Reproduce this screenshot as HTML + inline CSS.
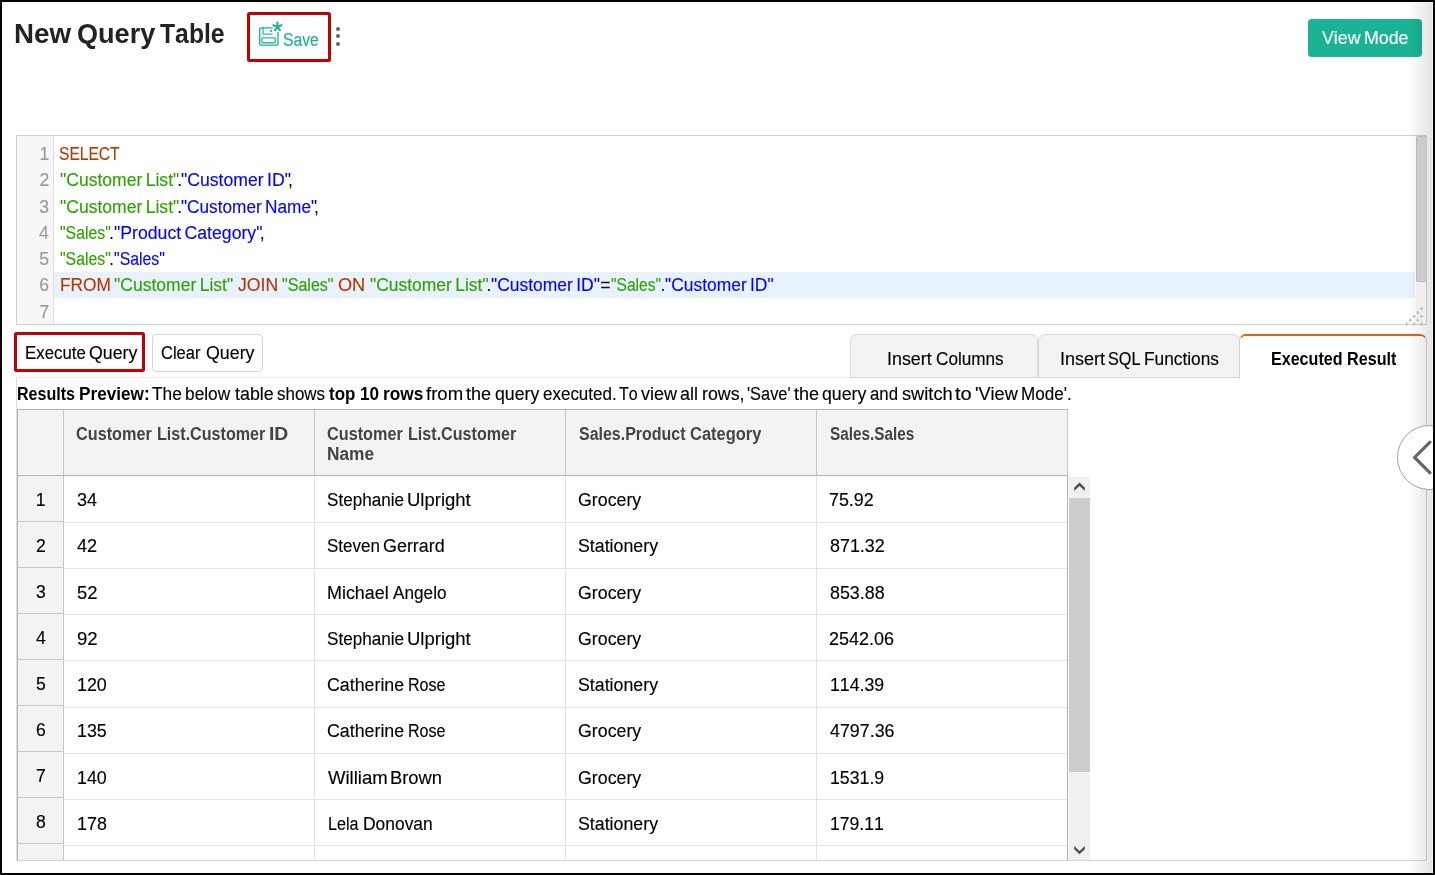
<!DOCTYPE html>
<html lang="en"><head><meta charset="utf-8"><title>New Query Table</title>
<style>
html,body{margin:0;padding:0}
body{width:1435px;height:875px;overflow:hidden;background:#fff;position:relative;font-family:"Liberation Sans",sans-serif;font-kerning:none;color:#111}
.t{position:absolute;white-space:pre;transform-origin:0 0;display:block;-webkit-text-stroke:0.14px currentColor}
.t.b{-webkit-text-stroke:0}
.abs{position:absolute;box-sizing:border-box}
</style></head><body>
<div id="app" style="position:absolute;left:0;top:0;width:1435px;height:875px;will-change:transform">

<header>
<span class="t b" style="left:14.40px;top:16.10px;font-size:28.5px;line-height:34px;font-weight:bold;color:#222;word-spacing:-2.42px;transform:scaleX(0.9727);">New </span>
<span class="t b" style="left:76.74px;top:16.10px;font-size:28.5px;line-height:34px;font-weight:bold;color:#222;word-spacing:-2.42px;transform:scaleX(0.9501);">Query </span>
<span class="t b" style="left:160.47px;top:16.10px;font-size:28.5px;line-height:34px;font-weight:bold;color:#222;word-spacing:-2.42px;transform:scaleX(0.8682);">Table</span>
<div class="abs" style="left:246.7px;top:12.3px;width:84px;height:49.4px;border:3.2px solid #c00000;border-radius:2.5px"></div>
<svg class="abs" style="left:252px;top:16px" width="40" height="36" viewBox="252 16 40 36" fill="none" stroke="#1ab394" stroke-width="1.35" stroke-linejoin="round" stroke-linecap="round">
<path d="M272.2 27.8 H261.2 Q259.7 27.8 259.7 29.3 V43.6 Q259.7 45.1 261.2 45.1 H276.5 Q278 45.1 278 43.6 V32.6"/>
<path d="M263.1 28 V34.1 H272.2" stroke-opacity="0.85"/>
<rect x="261.9" y="37.8" width="13.4" height="4.9" rx="1" stroke-opacity="0.9"/>
<circle cx="271.1" cy="30.9" r="1.05" fill="#1ab394" stroke="none"/>
<g stroke-width="2.1"><path d="M277.5 26.9 V22.6 M277.5 26.9 L273.5 25.2 M277.5 26.9 L281.5 25.2 M277.5 26.9 L275.1 30.1 M277.5 26.9 L279.9 30.1"/></g>
</svg>
<span class="t " style="left:282.84px;top:29.90px;font-size:17.6px;line-height:21px;color:#1ab394;word-spacing:-1.50px;transform:scaleX(0.8927);">Save</span>
<div class="abs" style="left:336px;top:26.5px;width:4px;height:4px;border-radius:50%;background:#666"></div>
<div class="abs" style="left:336px;top:34.0px;width:4px;height:4px;border-radius:50%;background:#666"></div>
<div class="abs" style="left:336px;top:41.5px;width:4px;height:4px;border-radius:50%;background:#666"></div>
<div class="abs" style="left:1308px;top:19px;width:114px;height:38px;background:#1ab394;border-radius:4px"></div>
<span class="t " style="left:1321.97px;top:27.00px;font-size:18px;line-height:22px;color:#fff;word-spacing:-1.53px;transform:scaleX(0.9881);">View Mode</span>
</header>
<section id="editor" aria-label="SQL editor">
<div class="abs" id="editor-box" style="left:16px;top:135px;width:1411px;height:190px;border:1px solid #d0d0d0;background:#fff"></div>
<div class="abs" style="left:17px;top:136px;width:37px;height:188px;background:#f7f7f7;border-right:1px solid #ddd"></div>
<div class="abs" style="left:54px;top:271.80px;width:1360.8px;height:25.90px;background:#e8f2ff"></div>
<span class="t " style="left:39.42px;top:144.00px;font-size:17.6px;line-height:21px;color:#999;word-spacing:-1.50px;transform:scaleX(1.0000);">1</span>
<span class="t " style="left:39.45px;top:170.20px;font-size:17.6px;line-height:21px;color:#999;word-spacing:-1.50px;transform:scaleX(1.0000);">2</span>
<span class="t " style="left:39.34px;top:196.50px;font-size:17.6px;line-height:21px;color:#999;word-spacing:-1.50px;transform:scaleX(1.0000);">3</span>
<span class="t " style="left:39.08px;top:222.80px;font-size:17.6px;line-height:21px;color:#999;word-spacing:-1.50px;transform:scaleX(1.0000);">4</span>
<span class="t " style="left:39.30px;top:249.00px;font-size:17.6px;line-height:21px;color:#999;word-spacing:-1.50px;transform:scaleX(1.0000);">5</span>
<span class="t " style="left:39.34px;top:275.00px;font-size:17.6px;line-height:21px;color:#999;word-spacing:-1.50px;transform:scaleX(1.0000);">6</span>
<span class="t " style="left:39.45px;top:301.50px;font-size:17.6px;line-height:21px;color:#999;word-spacing:-1.50px;transform:scaleX(1.0000);">7</span>
<span class="t " style="left:59.44px;top:144.00px;font-size:17.6px;line-height:21px;color:#b03a00;word-spacing:-1.50px;transform:scaleX(0.8861);">SELECT</span>
<span class="t " style="left:59.50px;top:170.20px;font-size:17.6px;line-height:21px;color:#33a000;word-spacing:-1.50px;transform:scaleX(0.9977);">"Customer List"</span>
<span class="t " style="left:177.19px;top:170.20px;font-size:17.6px;line-height:21px;color:#111;word-spacing:-1.50px;transform:scaleX(1.0000);">.</span>
<span class="t " style="left:180.50px;top:170.20px;font-size:17.6px;line-height:21px;color:#0505ff;word-spacing:-1.50px;transform:scaleX(1.0020);">"Customer ID"</span>
<span class="t " style="left:287.92px;top:170.20px;font-size:17.6px;line-height:21px;color:#111;word-spacing:-1.50px;transform:scaleX(1.0000);">,</span>
<span class="t " style="left:59.50px;top:196.50px;font-size:17.6px;line-height:21px;color:#33a000;word-spacing:-1.50px;transform:scaleX(0.9977);">"Customer List"</span>
<span class="t " style="left:177.19px;top:196.50px;font-size:17.6px;line-height:21px;color:#111;word-spacing:-1.50px;transform:scaleX(1.0000);">.</span>
<span class="t " style="left:180.52px;top:196.50px;font-size:17.6px;line-height:21px;color:#0505ff;word-spacing:-1.50px;transform:scaleX(0.9787);">"Customer Name"</span>
<span class="t " style="left:314.12px;top:196.50px;font-size:17.6px;line-height:21px;color:#111;word-spacing:-1.50px;transform:scaleX(1.0000);">,</span>
<span class="t " style="left:59.58px;top:222.80px;font-size:17.6px;line-height:21px;color:#33a000;word-spacing:-1.50px;transform:scaleX(0.8996);">"Sales"</span>
<span class="t " style="left:108.89px;top:222.80px;font-size:17.6px;line-height:21px;color:#111;word-spacing:-1.50px;transform:scaleX(1.0000);">.</span>
<span class="t " style="left:113.80px;top:222.80px;font-size:17.6px;line-height:21px;color:#0505ff;word-spacing:-1.50px;transform:scaleX(1.0037);">"Product Category"</span>
<span class="t " style="left:259.72px;top:222.80px;font-size:17.6px;line-height:21px;color:#111;word-spacing:-1.50px;transform:scaleX(1.0000);">,</span>
<span class="t " style="left:59.58px;top:249.00px;font-size:17.6px;line-height:21px;color:#33a000;word-spacing:-1.50px;transform:scaleX(0.8996);">"Sales"</span>
<span class="t " style="left:108.89px;top:249.00px;font-size:17.6px;line-height:21px;color:#111;word-spacing:-1.50px;transform:scaleX(1.0000);">.</span>
<span class="t " style="left:113.88px;top:249.00px;font-size:17.6px;line-height:21px;color:#0505ff;word-spacing:-1.50px;transform:scaleX(0.9014);">"Sales"</span>
<span class="t " style="left:59.53px;top:275.00px;font-size:17.6px;line-height:21px;color:#b03a00;word-spacing:-1.50px;transform:scaleX(0.9832);">FROM</span>
<span class="t " style="left:114.20px;top:275.00px;font-size:17.6px;line-height:21px;color:#33a000;word-spacing:-1.50px;transform:scaleX(0.9969);">"Customer List"</span>
<span class="t " style="left:237.97px;top:275.00px;font-size:17.6px;line-height:21px;color:#b03a00;word-spacing:-1.50px;transform:scaleX(1.0031);">JOIN</span>
<span class="t " style="left:282.47px;top:275.00px;font-size:17.6px;line-height:21px;color:#33a000;word-spacing:-1.50px;transform:scaleX(0.9123);">"Sales"</span>
<span class="t " style="left:338.09px;top:275.00px;font-size:17.6px;line-height:21px;color:#b03a00;word-spacing:-1.50px;transform:scaleX(1.0319);">ON</span>
<span class="t " style="left:369.61px;top:275.00px;font-size:17.6px;line-height:21px;color:#33a000;word-spacing:-1.50px;transform:scaleX(0.9926);">"Customer List"</span>
<span class="t " style="left:486.59px;top:275.00px;font-size:17.6px;line-height:21px;color:#111;word-spacing:-1.50px;transform:scaleX(1.0000);">.</span>
<span class="t " style="left:490.61px;top:275.00px;font-size:17.6px;line-height:21px;color:#0505ff;word-spacing:-1.50px;transform:scaleX(0.9919);">"Customer ID"</span>
<span class="t " style="left:600.27px;top:275.00px;font-size:17.6px;line-height:21px;color:#111;word-spacing:-1.50px;transform:scaleX(1.0000);">=</span>
<span class="t " style="left:610.99px;top:275.00px;font-size:17.6px;line-height:21px;color:#33a000;word-spacing:-1.50px;transform:scaleX(0.8869);">"Sales"</span>
<span class="t " style="left:660.49px;top:275.00px;font-size:17.6px;line-height:21px;color:#111;word-spacing:-1.50px;transform:scaleX(1.0000);">.</span>
<span class="t " style="left:664.91px;top:275.00px;font-size:17.6px;line-height:21px;color:#0505ff;word-spacing:-1.50px;transform:scaleX(0.9900);">"Customer ID"</span>
</section>
<div id="actions">
<div class="abs" style="left:14.3px;top:332.3px;width:131px;height:40.2px;border:3.2px solid #c00000;border-radius:2.5px"></div>
<span class="t " style="left:24.57px;top:343.10px;font-size:17.6px;line-height:21px;color:#000;word-spacing:-1.50px;transform:scaleX(0.9565);">Execute </span>
<span class="t " style="left:89.31px;top:343.10px;font-size:17.6px;line-height:21px;color:#000;word-spacing:-1.50px;transform:scaleX(1.0094);">Query</span>
<div class="abs" style="left:152px;top:334px;width:110.6px;height:37.6px;border:1px solid #d6d6d6;border-radius:4px;background:#fff"></div>
<span class="t " style="left:161.11px;top:343.10px;font-size:17.6px;line-height:21px;color:#000;word-spacing:-1.50px;transform:scaleX(0.9371);">Clear </span>
<span class="t " style="left:205.91px;top:343.10px;font-size:17.6px;line-height:21px;color:#000;word-spacing:-1.50px;transform:scaleX(1.0115);">Query</span>
</div>
<section id="results">
<div class="abs" id="panel" style="left:16px;top:376.6px;width:1411px;height:484.4px;border:1px solid #d4d4d4;border-left-color:#dcdcdc;border-top:1.4px solid #eeebed;background:#fff"></div>
<div class="abs" style="left:850px;top:334.2px;width:188px;height:43.6px;background:#f3f3f3;border:1px solid #dcdcdc;border-bottom-color:#d6d6d6;border-radius:7px 7px 0 0"></div>
<div class="abs" style="left:1038px;top:334.2px;width:202px;height:43.6px;background:#f3f3f3;border:1px solid #dcdcdc;border-bottom-color:#d6d6d6;border-radius:7px 7px 0 0"></div>
<div class="abs" style="left:1239.4px;top:334.2px;width:187.6px;height:44.4px;background:#fff;border:1px solid #d4d4d4;border-top:2.4px solid #e8601c;border-bottom:none;border-radius:7px 7px 0 0"></div>
<span class="t " style="left:887.30px;top:349.00px;font-size:17.6px;line-height:21px;color:#000;word-spacing:-1.50px;transform:scaleX(1.0150);">Insert </span>
<span class="t " style="left:935.68px;top:349.00px;font-size:17.6px;line-height:21px;color:#000;word-spacing:-1.50px;transform:scaleX(0.9747);">Columns</span>
<span class="t " style="left:1060.29px;top:349.00px;font-size:17.6px;line-height:21px;color:#000;word-spacing:-1.50px;transform:scaleX(1.0245);">Insert </span>
<span class="t " style="left:1108.21px;top:349.00px;font-size:17.6px;line-height:21px;color:#000;word-spacing:-1.50px;transform:scaleX(0.9222);">SQL </span>
<span class="t " style="left:1144.23px;top:349.00px;font-size:17.6px;line-height:21px;color:#000;word-spacing:-1.50px;transform:scaleX(0.9835);">Functions</span>
<span class="t b" style="left:1270.87px;top:349.00px;font-size:17.6px;line-height:21px;font-weight:bold;color:#000;word-spacing:-1.50px;transform:scaleX(0.9142);">Executed </span>
<span class="t b" style="left:1347.47px;top:349.00px;font-size:17.6px;line-height:21px;font-weight:bold;color:#000;word-spacing:-1.50px;transform:scaleX(0.9180);">Result</span>
<span class="t b" style="left:17.38px;top:384.10px;font-size:17.6px;line-height:21px;font-weight:bold;color:#000;word-spacing:-1.50px;transform:scaleX(0.9128);">Results </span>
<span class="t b" style="left:79.30px;top:384.10px;font-size:17.6px;line-height:21px;font-weight:bold;color:#000;word-spacing:-1.50px;transform:scaleX(0.9766);">Preview:</span>
<span class="t " style="left:151.86px;top:384.10px;font-size:17.6px;line-height:21px;color:#000;word-spacing:-1.50px;transform:scaleX(0.9846);">The </span>
<span class="t " style="left:185.13px;top:384.10px;font-size:17.6px;line-height:21px;color:#000;word-spacing:-1.50px;transform:scaleX(0.9845);">below </span>
<span class="t " style="left:235.28px;top:384.10px;font-size:17.6px;line-height:21px;color:#000;word-spacing:-1.50px;transform:scaleX(1.0157);">table </span>
<span class="t " style="left:277.28px;top:384.10px;font-size:17.6px;line-height:21px;color:#000;word-spacing:-1.50px;transform:scaleX(0.9639);">shows</span>
<span class="t b" style="left:329.04px;top:384.10px;font-size:17.6px;line-height:21px;font-weight:bold;color:#000;word-spacing:-1.50px;transform:scaleX(0.9612);">top </span>
<span class="t b" style="left:359.67px;top:384.10px;font-size:17.6px;line-height:21px;font-weight:bold;color:#000;word-spacing:-1.50px;transform:scaleX(0.9749);">10 </span>
<span class="t b" style="left:382.51px;top:384.10px;font-size:17.6px;line-height:21px;font-weight:bold;color:#000;word-spacing:-1.50px;transform:scaleX(0.9822);">rows</span>
<span class="t " style="left:425.89px;top:384.10px;font-size:17.6px;line-height:21px;color:#000;word-spacing:-1.50px;transform:scaleX(1.0535);">from </span>
<span class="t " style="left:466.28px;top:384.10px;font-size:17.6px;line-height:21px;color:#000;word-spacing:-1.50px;transform:scaleX(1.0249);">the </span>
<span class="t " style="left:495.40px;top:384.10px;font-size:17.6px;line-height:21px;color:#000;word-spacing:-1.50px;transform:scaleX(1.0080);">query</span>
<span class="t " style="left:543.23px;top:384.10px;font-size:17.6px;line-height:21px;color:#000;word-spacing:-1.50px;transform:scaleX(0.9653);">executed. </span>
<span class="t " style="left:619.49px;top:384.10px;font-size:17.6px;line-height:21px;color:#000;word-spacing:-1.50px;transform:scaleX(0.9122);">To </span>
<span class="t " style="left:641.09px;top:384.10px;font-size:17.6px;line-height:21px;color:#000;word-spacing:-1.50px;transform:scaleX(1.0258);">view </span>
<span class="t " style="left:680.49px;top:384.10px;font-size:17.6px;line-height:21px;color:#000;word-spacing:-1.50px;transform:scaleX(1.0202);">all </span>
<span class="t " style="left:701.77px;top:384.10px;font-size:17.6px;line-height:21px;color:#000;word-spacing:-1.50px;transform:scaleX(1.0127);">rows,</span>
<span class="t " style="left:746.72px;top:384.10px;font-size:17.6px;line-height:21px;color:#000;word-spacing:-1.50px;transform:scaleX(0.9299);">'Save' </span>
<span class="t " style="left:793.68px;top:384.10px;font-size:17.6px;line-height:21px;color:#000;word-spacing:-1.50px;transform:scaleX(1.0249);">the </span>
<span class="t " style="left:821.70px;top:384.10px;font-size:17.6px;line-height:21px;color:#000;word-spacing:-1.50px;transform:scaleX(1.0080);">query </span>
<span class="t " style="left:870.14px;top:384.10px;font-size:17.6px;line-height:21px;color:#000;word-spacing:-1.50px;transform:scaleX(0.9533);">and</span>
<span class="t " style="left:901.74px;top:384.10px;font-size:17.6px;line-height:21px;color:#000;word-spacing:-1.50px;transform:scaleX(1.0367);">switch </span>
<span class="t " style="left:954.95px;top:384.10px;font-size:17.6px;line-height:21px;color:#000;word-spacing:-1.50px;transform:scaleX(1.1410);">to </span>
<span class="t " style="left:974.83px;top:384.10px;font-size:17.6px;line-height:21px;color:#000;word-spacing:-1.50px;transform:scaleX(1.0306);">'View </span>
<span class="t " style="left:1021.45px;top:384.10px;font-size:17.6px;line-height:21px;color:#000;word-spacing:-1.50px;transform:scaleX(0.9711);">Mode'.</span>
<div class="abs" style="left:17.2px;top:408.8px;width:1050.8px;height:67.2px;background:#f3f3f3;border:1px solid #b4b4b4;border-right-color:#c4c4c4"></div>
<div class="abs" style="left:62.9px;top:409.8px;width:1px;height:65.4px;background:#c8c8c8"></div>
<div class="abs" style="left:314.1px;top:409.8px;width:1px;height:65.4px;background:#c8c8c8"></div>
<div class="abs" style="left:564.9px;top:409.8px;width:1px;height:65.4px;background:#c8c8c8"></div>
<div class="abs" style="left:815.9px;top:409.8px;width:1px;height:65.4px;background:#c8c8c8"></div>
<span class="t b" style="left:76.48px;top:423.70px;font-size:17.6px;line-height:21px;font-weight:bold;color:#444;word-spacing:-1.50px;transform:scaleX(0.9229);">Customer </span>
<span class="t b" style="left:157.27px;top:423.70px;font-size:17.6px;line-height:21px;font-weight:bold;color:#444;word-spacing:-1.50px;transform:scaleX(0.9154);">List.Customer </span>
<span class="t b" style="left:269.46px;top:423.70px;font-size:17.6px;line-height:21px;font-weight:bold;color:#444;word-spacing:-1.50px;transform:scaleX(1.0967);">ID</span>
<span class="t b" style="left:327.38px;top:423.70px;font-size:17.6px;line-height:21px;font-weight:bold;color:#444;word-spacing:-1.50px;transform:scaleX(0.9229);">Customer </span>
<span class="t b" style="left:408.17px;top:423.70px;font-size:17.6px;line-height:21px;font-weight:bold;color:#444;word-spacing:-1.50px;transform:scaleX(0.9154);">List.Customer</span>
<span class="t b" style="left:327.29px;top:444.30px;font-size:17.6px;line-height:21px;font-weight:bold;color:#444;word-spacing:-1.50px;transform:scaleX(0.9836);">Name</span>
<span class="t b" style="left:578.69px;top:423.70px;font-size:17.6px;line-height:21px;font-weight:bold;color:#444;word-spacing:-1.50px;transform:scaleX(0.9078);">Sales.Product </span>
<span class="t b" style="left:689.67px;top:423.70px;font-size:17.6px;line-height:21px;font-weight:bold;color:#444;word-spacing:-1.50px;transform:scaleX(0.9368);">Category</span>
<span class="t b" style="left:829.61px;top:423.70px;font-size:17.6px;line-height:21px;font-weight:bold;color:#444;word-spacing:-1.50px;transform:scaleX(0.8709);">Sales.Sales</span>
<div class="abs" style="left:17.2px;top:476px;width:46.8px;height:384px;background:#f3f3f3;border-left:1px solid #b4b4b4;border-right:1px solid #c8c8c8"></div>
<div class="abs" style="left:1066.8px;top:476px;width:1px;height:384.6px;background:#b0b0b0"></div>
<div class="abs" style="left:314.1px;top:476px;width:1px;height:384.6px;background:#e4e4e4"></div>
<div class="abs" style="left:564.9px;top:476px;width:1px;height:384.6px;background:#e4e4e4"></div>
<div class="abs" style="left:815.9px;top:476px;width:1px;height:384.6px;background:#e4e4e4"></div>
<div class="abs" style="left:18.2px;top:521.00px;width:45.2px;height:1px;background:#c6c6c6"></div>
<div class="abs" style="left:64.2px;top:521.70px;width:1002.6px;height:1px;background:#e4e4e4"></div>
<span class="t " style="left:35.72px;top:489.80px;font-size:17.6px;line-height:21px;color:#000;word-spacing:-1.50px;transform:scaleX(1.0000);">1</span>
<span class="t " style="left:76.76px;top:489.80px;font-size:17.6px;line-height:21px;color:#000;word-spacing:-1.50px;transform:scaleX(1.0223);">34</span>
<span class="t " style="left:327.17px;top:489.80px;font-size:17.6px;line-height:21px;color:#000;word-spacing:-1.50px;transform:scaleX(0.9718);">Stephanie </span>
<span class="t " style="left:407.32px;top:489.80px;font-size:17.6px;line-height:21px;color:#000;word-spacing:-1.50px;transform:scaleX(1.0514);">Ulpright</span>
<span class="t " style="left:577.96px;top:489.80px;font-size:17.6px;line-height:21px;color:#000;word-spacing:-1.50px;transform:scaleX(1.0102);">Grocery</span>
<span class="t " style="left:829.43px;top:489.80px;font-size:17.6px;line-height:21px;color:#000;word-spacing:-1.50px;transform:scaleX(1.0153);">75.92</span>
<div class="abs" style="left:18.2px;top:567.00px;width:45.2px;height:1px;background:#c6c6c6"></div>
<div class="abs" style="left:64.2px;top:567.90px;width:1002.6px;height:1px;background:#e4e4e4"></div>
<span class="t " style="left:35.96px;top:535.80px;font-size:17.6px;line-height:21px;color:#000;word-spacing:-1.50px;transform:scaleX(1.0000);">2</span>
<span class="t " style="left:77.03px;top:535.80px;font-size:17.6px;line-height:21px;color:#000;word-spacing:-1.50px;transform:scaleX(1.0280);">42</span>
<span class="t " style="left:327.18px;top:535.80px;font-size:17.6px;line-height:21px;color:#000;word-spacing:-1.50px;transform:scaleX(0.9650);">Steven </span>
<span class="t " style="left:383.35px;top:535.80px;font-size:17.6px;line-height:21px;color:#000;word-spacing:-1.50px;transform:scaleX(1.0185);">Gerrard</span>
<span class="t " style="left:578.04px;top:535.80px;font-size:17.6px;line-height:21px;color:#000;word-spacing:-1.50px;transform:scaleX(1.0101);">Stationery</span>
<span class="t " style="left:829.57px;top:535.80px;font-size:17.6px;line-height:21px;color:#000;word-spacing:-1.50px;transform:scaleX(1.0176);">871.32</span>
<div class="abs" style="left:18.2px;top:613.00px;width:45.2px;height:1px;background:#c6c6c6"></div>
<div class="abs" style="left:64.2px;top:614.10px;width:1002.6px;height:1px;background:#e4e4e4"></div>
<span class="t " style="left:36.01px;top:581.80px;font-size:17.6px;line-height:21px;color:#000;word-spacing:-1.50px;transform:scaleX(1.0000);">3</span>
<span class="t " style="left:76.71px;top:582.80px;font-size:17.6px;line-height:21px;color:#000;word-spacing:-1.50px;transform:scaleX(1.0452);">52</span>
<span class="t " style="left:327.28px;top:582.80px;font-size:17.6px;line-height:21px;color:#000;word-spacing:-1.50px;transform:scaleX(1.0185);">Michael </span>
<span class="t " style="left:392.82px;top:582.80px;font-size:17.6px;line-height:21px;color:#000;word-spacing:-1.50px;transform:scaleX(0.9773);">Angelo</span>
<span class="t " style="left:577.96px;top:582.80px;font-size:17.6px;line-height:21px;color:#000;word-spacing:-1.50px;transform:scaleX(1.0102);">Grocery</span>
<span class="t " style="left:829.57px;top:582.80px;font-size:17.6px;line-height:21px;color:#000;word-spacing:-1.50px;transform:scaleX(1.0153);">853.88</span>
<div class="abs" style="left:18.2px;top:659.00px;width:45.2px;height:1px;background:#c6c6c6"></div>
<div class="abs" style="left:64.2px;top:660.30px;width:1002.6px;height:1px;background:#e4e4e4"></div>
<span class="t " style="left:36.01px;top:627.80px;font-size:17.6px;line-height:21px;color:#000;word-spacing:-1.50px;transform:scaleX(1.0000);">4</span>
<span class="t " style="left:76.58px;top:628.80px;font-size:17.6px;line-height:21px;color:#000;word-spacing:-1.50px;transform:scaleX(1.0523);">92</span>
<span class="t " style="left:327.17px;top:628.80px;font-size:17.6px;line-height:21px;color:#000;word-spacing:-1.50px;transform:scaleX(0.9718);">Stephanie </span>
<span class="t " style="left:407.32px;top:628.80px;font-size:17.6px;line-height:21px;color:#000;word-spacing:-1.50px;transform:scaleX(1.0514);">Ulpright</span>
<span class="t " style="left:577.96px;top:628.80px;font-size:17.6px;line-height:21px;color:#000;word-spacing:-1.50px;transform:scaleX(1.0102);">Grocery</span>
<span class="t " style="left:829.45px;top:628.80px;font-size:17.6px;line-height:21px;color:#000;word-spacing:-1.50px;transform:scaleX(1.0216);">2542.06</span>
<div class="abs" style="left:18.2px;top:705.00px;width:45.2px;height:1px;background:#c6c6c6"></div>
<div class="abs" style="left:64.2px;top:706.50px;width:1002.6px;height:1px;background:#e4e4e4"></div>
<span class="t " style="left:35.97px;top:673.80px;font-size:17.6px;line-height:21px;color:#000;word-spacing:-1.50px;transform:scaleX(1.0000);">5</span>
<span class="t " style="left:77.39px;top:674.80px;font-size:17.6px;line-height:21px;color:#000;word-spacing:-1.50px;transform:scaleX(1.0133);">120</span>
<span class="t " style="left:327.25px;top:674.80px;font-size:17.6px;line-height:21px;color:#000;word-spacing:-1.50px;transform:scaleX(1.0116);">Catherine </span>
<span class="t " style="left:408.03px;top:674.80px;font-size:17.6px;line-height:21px;color:#000;word-spacing:-1.50px;transform:scaleX(0.9135);">Rose</span>
<span class="t " style="left:578.04px;top:674.80px;font-size:17.6px;line-height:21px;color:#000;word-spacing:-1.50px;transform:scaleX(1.0101);">Stationery</span>
<span class="t " style="left:830.10px;top:674.80px;font-size:17.6px;line-height:21px;color:#000;word-spacing:-1.50px;transform:scaleX(1.0066);">114.39</span>
<div class="abs" style="left:18.2px;top:751.00px;width:45.2px;height:1px;background:#c6c6c6"></div>
<div class="abs" style="left:64.2px;top:752.70px;width:1002.6px;height:1px;background:#e4e4e4"></div>
<span class="t " style="left:35.90px;top:719.80px;font-size:17.6px;line-height:21px;color:#000;word-spacing:-1.50px;transform:scaleX(1.0000);">6</span>
<span class="t " style="left:77.39px;top:720.80px;font-size:17.6px;line-height:21px;color:#000;word-spacing:-1.50px;transform:scaleX(1.0152);">135</span>
<span class="t " style="left:327.25px;top:720.80px;font-size:17.6px;line-height:21px;color:#000;word-spacing:-1.50px;transform:scaleX(1.0116);">Catherine </span>
<span class="t " style="left:408.03px;top:720.80px;font-size:17.6px;line-height:21px;color:#000;word-spacing:-1.50px;transform:scaleX(0.9135);">Rose</span>
<span class="t " style="left:577.96px;top:720.80px;font-size:17.6px;line-height:21px;color:#000;word-spacing:-1.50px;transform:scaleX(1.0102);">Grocery</span>
<span class="t " style="left:829.94px;top:720.80px;font-size:17.6px;line-height:21px;color:#000;word-spacing:-1.50px;transform:scaleX(1.0137);">4797.36</span>
<div class="abs" style="left:18.2px;top:797.00px;width:45.2px;height:1px;background:#c6c6c6"></div>
<div class="abs" style="left:64.2px;top:798.90px;width:1002.6px;height:1px;background:#e4e4e4"></div>
<span class="t " style="left:35.95px;top:765.80px;font-size:17.6px;line-height:21px;color:#000;word-spacing:-1.50px;transform:scaleX(1.0000);">7</span>
<span class="t " style="left:77.39px;top:767.80px;font-size:17.6px;line-height:21px;color:#000;word-spacing:-1.50px;transform:scaleX(1.0133);">140</span>
<span class="t " style="left:327.67px;top:767.80px;font-size:17.6px;line-height:21px;color:#000;word-spacing:-1.50px;transform:scaleX(1.0529);">William </span>
<span class="t " style="left:389.94px;top:767.80px;font-size:17.6px;line-height:21px;color:#000;word-spacing:-1.50px;transform:scaleX(1.0444);">Brown</span>
<span class="t " style="left:577.96px;top:767.80px;font-size:17.6px;line-height:21px;color:#000;word-spacing:-1.50px;transform:scaleX(1.0102);">Grocery</span>
<span class="t " style="left:830.10px;top:767.80px;font-size:17.6px;line-height:21px;color:#000;word-spacing:-1.50px;transform:scaleX(1.0066);">1531.9</span>
<div class="abs" style="left:18.2px;top:843.00px;width:45.2px;height:1px;background:#c6c6c6"></div>
<div class="abs" style="left:64.2px;top:845.10px;width:1002.6px;height:1px;background:#e4e4e4"></div>
<span class="t " style="left:35.96px;top:811.80px;font-size:17.6px;line-height:21px;color:#000;word-spacing:-1.50px;transform:scaleX(1.0000);">8</span>
<span class="t " style="left:77.39px;top:813.80px;font-size:17.6px;line-height:21px;color:#000;word-spacing:-1.50px;transform:scaleX(1.0162);">178</span>
<span class="t " style="left:327.53px;top:813.80px;font-size:17.6px;line-height:21px;color:#000;word-spacing:-1.50px;transform:scaleX(0.9173);">Lela </span>
<span class="t " style="left:362.52px;top:813.80px;font-size:17.6px;line-height:21px;color:#000;word-spacing:-1.50px;transform:scaleX(0.9902);">Donovan</span>
<span class="t " style="left:578.04px;top:813.80px;font-size:17.6px;line-height:21px;color:#000;word-spacing:-1.50px;transform:scaleX(1.0101);">Stationery</span>
<span class="t " style="left:830.11px;top:813.80px;font-size:17.6px;line-height:21px;color:#000;word-spacing:-1.50px;transform:scaleX(0.9994);">179.11</span>
<div class="abs" style="left:1069.1px;top:477px;width:20.8px;height:383px;background:#f0f0f0"></div>
<div class="abs" style="left:1069.1px;top:498px;width:20.8px;height:273.8px;background:#cdcdcd"></div>
<svg class="abs" style="left:1069px;top:476px" width="22" height="24" viewBox="1069 476 22 24"><polygon fill="#505050" points="1074.2,487.7 1079.55,482.4 1084.9,487.7 1084.9,490.9 1079.55,485.9 1074.2,490.9"/></svg>
<svg class="abs" style="left:1069px;top:838px" width="22" height="24" viewBox="1069 838 22 24"><polygon fill="#505050" points="1074.2,849.2 1079.55,854.3 1084.9,849.2 1084.9,846.0 1079.55,850.9 1074.2,846.0"/></svg>
</section>
<div id="chrome">
<div class="abs" style="left:1408px;top:2px;width:24.2px;height:871px;background:linear-gradient(to right,rgba(0,0,0,0),rgba(0,0,0,0.108))"></div>
<div class="abs" style="left:1432.2px;top:2px;width:1px;height:871px;background:#f3f3f3"></div>
<div class="abs" style="left:1416px;top:136px;width:10.4px;height:188px;background:#eeeeee"></div>
<div class="abs" style="left:1416px;top:135.6px;width:10.8px;height:146px;background:#cccccc;border:1px solid #bababa;border-radius:1px"></div>
<div class="abs" style="left:1426.2px;top:135px;width:1px;height:190px;background:#c4c4c4"></div>
<svg class="abs" style="left:1400px;top:300px" width="30" height="30" viewBox="1400 300 30 30" stroke="#bdbdbd" stroke-width="1.1"><path d="M1419.9 308.9H1423.3M1421.6 307.2V310.6"/><path d="M1416.1 312.7H1419.5M1417.8 311.0V314.4"/><path d="M1419.9 316.4H1423.3M1421.6 314.7V318.1"/><path d="M1412.4 316.4H1415.8M1414.1 314.7V318.1"/><path d="M1416.1 320.2H1419.5M1417.8 318.5V321.9"/><path d="M1408.6 320.2H1412.0M1410.3 318.5V321.9"/><path d="M1404.8 324.0H1408.2M1406.5 322.3V325.7"/><path d="M1412.4 324.0H1415.8M1414.1 322.3V325.7"/><path d="M1419.9 324.0H1423.3M1421.6 322.3V325.7"/></svg>
<div class="abs" style="left:1397px;top:425px;width:64.6px;height:64.6px;border-radius:50%;background:#fff;border:1.2px solid #a0a0a0"></div>
<svg class="abs" style="left:1405px;top:435px" width="30" height="46" viewBox="1405 435 30 46" fill="none" stroke="#666" stroke-width="3.1" stroke-linecap="round" stroke-linejoin="miter"><path d="M1430 442.2 L1414.6 457.4 L1430 472.8"/></svg>
<div class="abs" style="left:0;top:0;width:1435px;height:875px;border:2px solid #000;pointer-events:none"></div>
</div>
</div></body></html>
